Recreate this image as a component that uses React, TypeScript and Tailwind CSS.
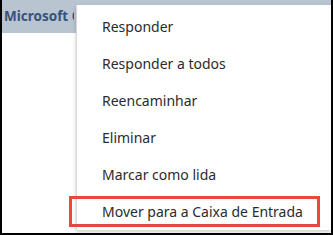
import React from "react";

const items = [
  "Responder",
  "Responder a todos",
  "Reencaminhar",
  "Eliminar",
  "Marcar como lida",
  "Mover para a Caixa de Entrada",
];

export default function App() {
  return (
    <div className="relative w-[333px] h-[235px] bg-white border-l-2 border-r-2 border-b-2 border-black overflow-hidden box-border">
      <div className="h-[33px] bg-[#b9c4d1] flex items-center pl-[2px] pb-[3px]">
        <div className="w-[70px] overflow-hidden">
          <span
            className="text-[13.5px] font-bold text-[#37527a] whitespace-nowrap"
            style={{ fontFamily: '"Noto Sans", "Open Sans", sans-serif' }}
          >
            Microsoft Outlook
          </span>
        </div>
      </div>
      <div className="absolute left-[74px] top-[5px] right-0 bottom-[3px] bg-white border-l border-[#d8d8d8] shadow-[0_2px_4px_rgba(0,0,0,0.2)] pt-[3px]">
        {items.map((t) => (
          <div
            key={t}
            className="h-[37px] flex items-center pl-[25px] text-[14px] text-[#2b2b2b] whitespace-nowrap"
            style={{ fontFamily: '"Noto Sans", "Open Sans", sans-serif' }}
          >
            {t}
          </div>
        ))}
      </div>
      <div className="absolute left-[67px] top-[196px] w-[251px] h-[31px] border-[3px] border-[#e8473f]" />
    </div>
  );
}
